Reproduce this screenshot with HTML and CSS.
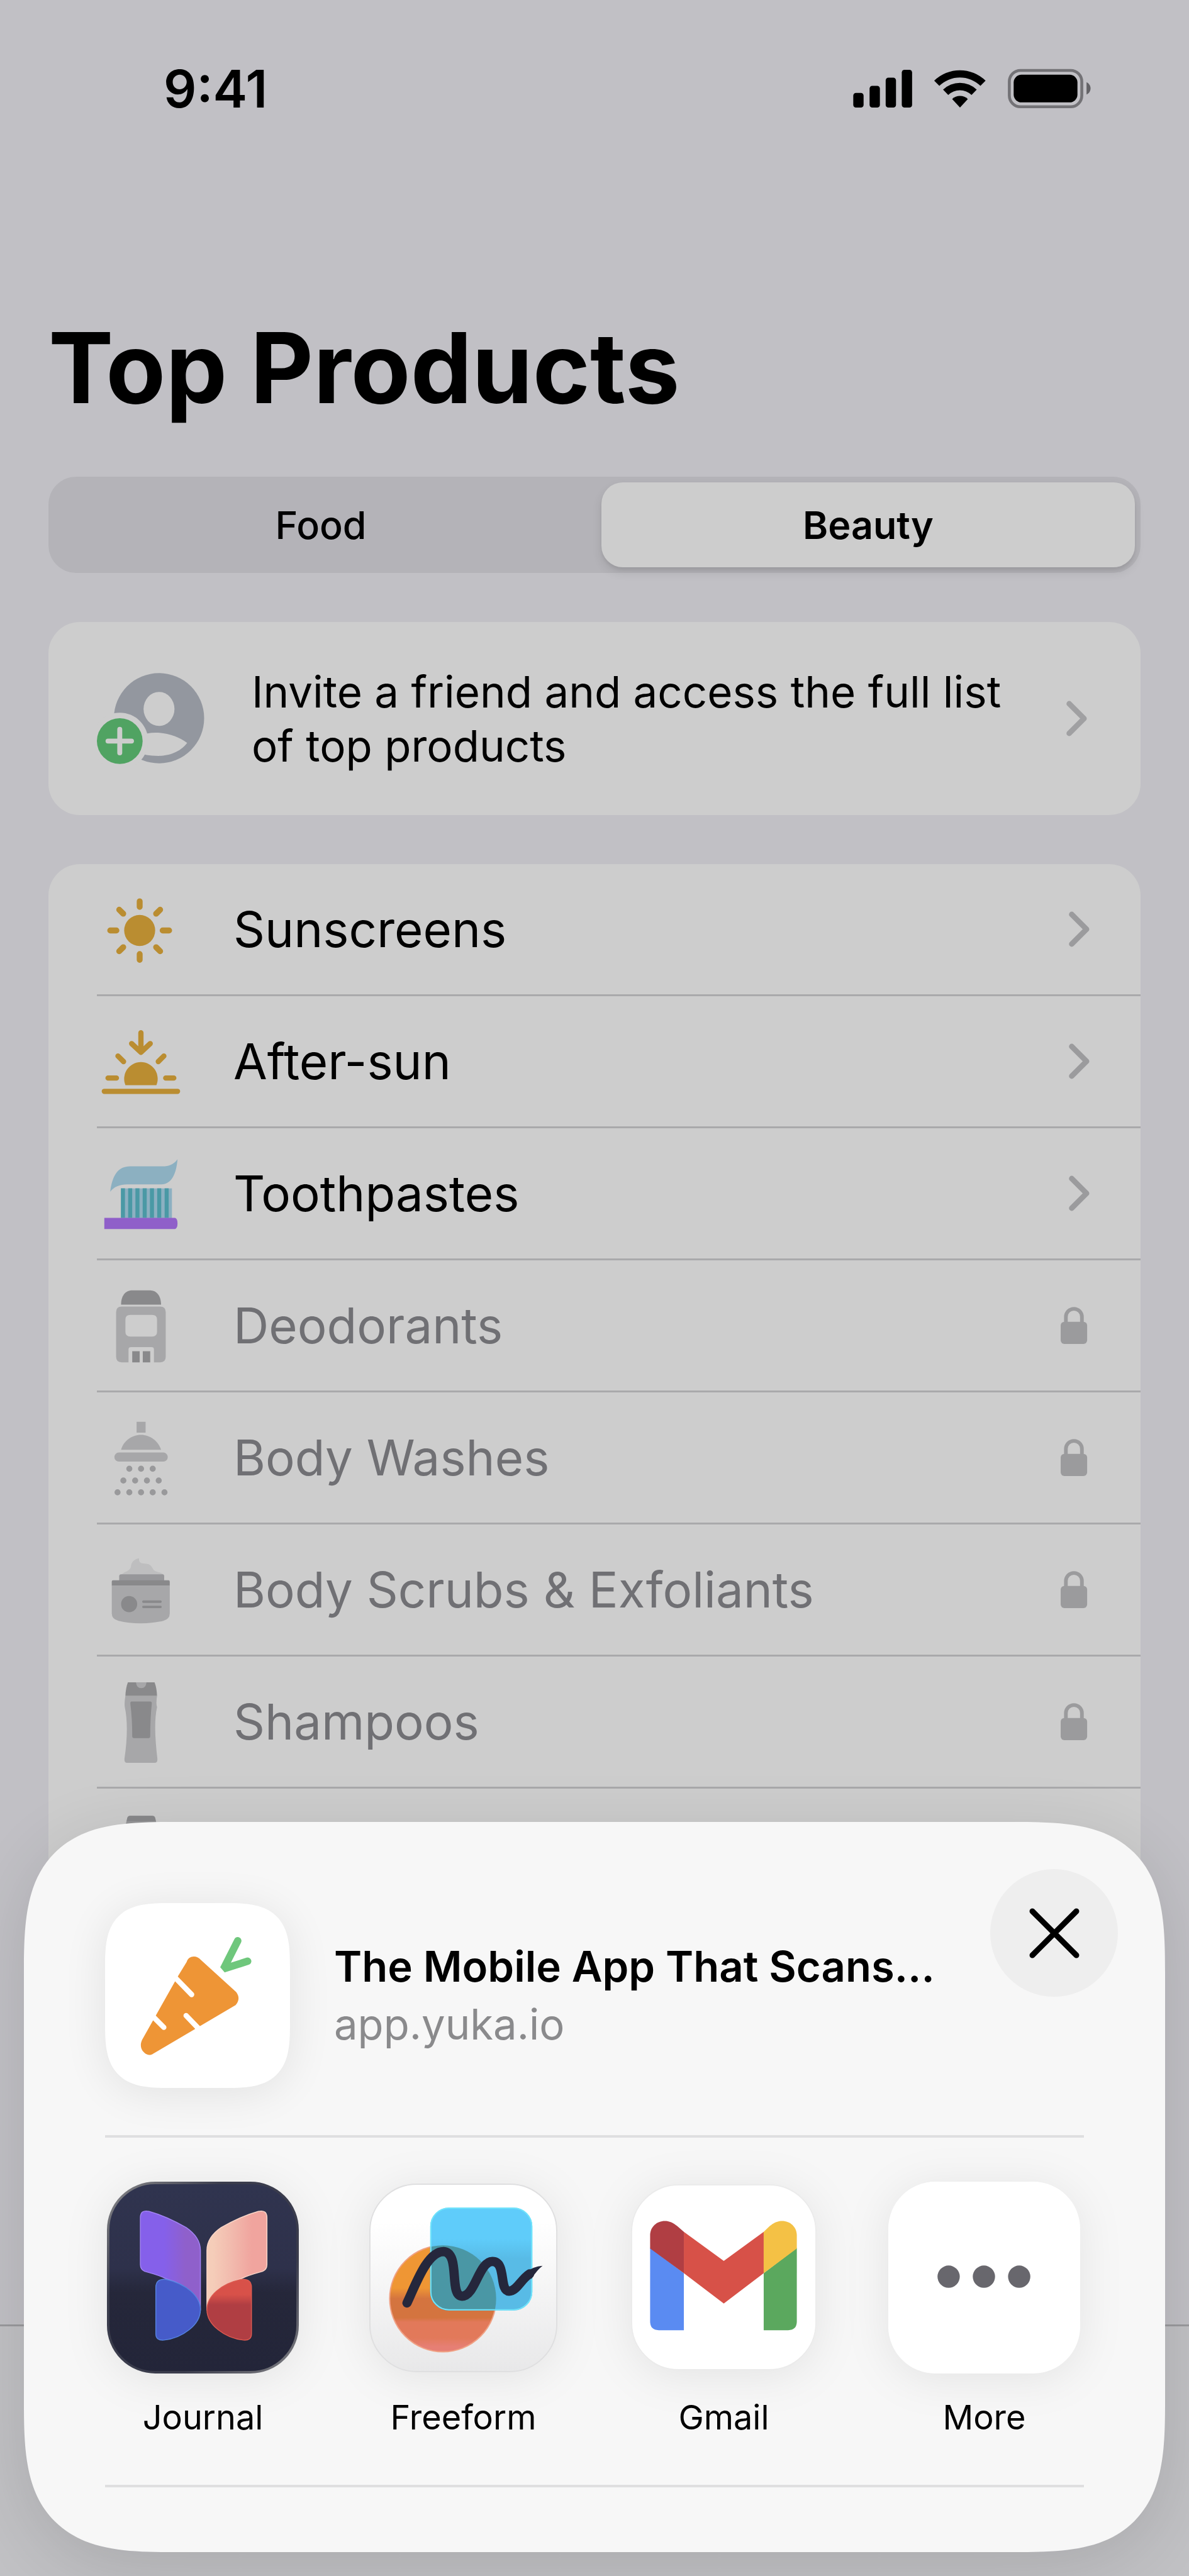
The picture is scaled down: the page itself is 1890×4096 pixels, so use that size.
FILE: index.html
```html
<!DOCTYPE html>
<html lang="en">
<head>
<meta charset="utf-8">
<title>Top Products</title>
<meta name="viewport" content="width=device-width, initial-scale=1">
<link rel="stylesheet" href="styles.css">
</head>
<body>
<svg class="defs" aria-hidden="true">
  <symbol id="chevron" viewBox="0 0 48 60">
    <path d="M18 6L42 30L18 54" fill="none" stroke="currentColor" stroke-width="9" stroke-linecap="round" stroke-linejoin="round"/>
  </symbol>
  <symbol id="lock" viewBox="0 0 48 60">
    <rect x="0" y="24" width="43" height="36" rx="6" fill="currentColor"/>
    <path d="M8.500 26V16a13 13 0 0 1 26 0V26" fill="none" stroke="currentColor" stroke-width="6"/>
  </symbol>
</svg>

<div class="app">
  <header class="status">
    <time class="clock">9:41</time>
    <svg class="status-icons" viewBox="111 60 1155 195" aria-hidden="true">
      <rect x="112" y="178" width="50" height="71" rx="13"/>
      <rect x="191" y="144" width="50" height="105" rx="13"/>
      <rect x="269" y="104" width="50" height="145" rx="13"/>
      <rect x="347" y="66" width="50" height="183" rx="13"/>
      <path d="M504 119A178 178 0 0 1 753 119L728 144A142 142 0 0 0 529 144Z"/>
      <path d="M547 162A117 117 0 0 1 710 162L685 188A81 81 0 0 0 572 188Z"/>
      <path d="M591 208A54 54 0 0 1 667 208L629 249Z"/>
      <rect x="868" y="69" width="351" height="176" rx="54" fill="none" stroke="#737276" stroke-width="14"/>
      <rect x="889" y="90" width="309" height="134" rx="38"/>
      <path d="M1242 126C1268 138 1268 174 1242 186Z" fill="#636266"/>
    </svg>
  </header>

  <main class="content">
    <h1 class="title">Top Products</h1>

    <div class="segments" role="tablist">
      <button class="segment" type="button" role="tab" aria-selected="false">Food</button>
      <button class="segment segment-on" type="button" role="tab" aria-selected="true">Beauty</button>
    </div>

    <a class="card invite" href="#invite">
      <svg class="avatar" viewBox="156 1087 174 149" aria-hidden="true">
        <circle cx="256.500" cy="1161" r="73" fill="#93979f"/>
        <ellipse cx="256.500" cy="1146" rx="25" ry="27.500" fill="#cdcdcd"/>
        <path d="M226 1189C246 1180 280 1184 302 1201C290 1217 270 1222 256 1222C240 1222 232 1220 220 1216Z" fill="#cdcdcd"/>
        <circle cx="193" cy="1198" r="46" fill="#cdcdcd"/>
        <circle cx="193" cy="1198" r="37" fill="#50a362"/>
        <path d="M193 1179V1217M174 1198H212" stroke="#cdcdcd" stroke-width="8" stroke-linecap="round"/>
      </svg>
      <span class="invite-text">Invite a friend and access the full list of top products</span>
      <svg class="mark mark-light"><use href="#chevron"/></svg>
    </a>

    <ul class="card list">
      <li><a class="row" href="#sunscreens">
        <svg class="icon" viewBox="156 1431 142 142" aria-hidden="true">
          <circle cx="225" cy="1503.500" r="25" fill="#ba8d31"/>
          <path d="M225 1456.500V1465.500M225 1541.500V1551M177.500 1503.500H187.500M262 1503.500H272.500M192 1470L198.500 1476.500M258 1470L251.500 1476.500M192 1537L198.500 1530.500M258 1537L251.500 1530.500" stroke="#ba8d31" stroke-width="9.500" stroke-linecap="round"/>
        </svg>
        <span class="label">Sunscreens</span>
        <svg class="mark"><use href="#chevron"/></svg>
      </a></li>
      <li><a class="row" href="#after-sun">
        <svg class="icon" viewBox="156 1644 142 142" aria-hidden="true">
          <path d="M202 1753A27 27 0 1 1 252 1753Z" fill="#ba8d31"/>
          <path d="M168 1763H286M174 1741.500H187.500M267 1741.500H280M190 1706L199 1715M264 1706L255 1715M227 1668.500V1698M212 1686L227 1700L242 1686" fill="none" stroke="#ba8d31" stroke-width="8.500" stroke-linecap="round" stroke-linejoin="round"/>
        </svg>
        <span class="label">After-sun</span>
        <svg class="mark"><use href="#chevron"/></svg>
      </a></li>
      <li><a class="row" href="#toothpastes">
        <svg class="icon" viewBox="156 1857 142 142" aria-hidden="true">
          <path d="M177.500 1925C181 1898 190 1884 210 1884H262C272 1884 280 1881 286 1872.500C284 1897 276 1913 260 1913H205C193 1913 183 1917 177.500 1925Z" fill="#8cb0c1"/>
          <rect x="195" y="1919.500" width="82" height="48" fill="#8cb0c1"/>
          <path d="M198 1919.500V1967M209.700 1919.500V1967M221.400 1919.500V1967M233.100 1919.500V1967M244.800 1919.500V1967M256.500 1919.500V1967M268.500 1919.500V1967" stroke="#4a99a5" stroke-width="6.500"/>
          <path d="M168 1967H282Q286 1968 286 1976Q286 1984 282 1985H168Z" fill="#8f5fc9"/>
        </svg>
        <span class="label">Toothpastes</span>
        <svg class="mark"><use href="#chevron"/></svg>
      </a></li>
      <li><a class="row row-locked" href="#deodorants">
        <svg class="icon" viewBox="156 2070 142 142" aria-hidden="true">
          <path d="M195 2107C195 2094 201 2084 213 2084H242C253 2084 259.500 2094 259.500 2107Z" fill="#89898b"/>
          <path fill-rule="evenodd" d="M196 2110H258Q267 2110 267 2119V2191Q267 2200 258 2200H248V2179Q248 2175.500 244 2175.500H211Q207 2175.500 207 2179V2200H196Q187 2200 187 2191V2119Q187 2110 196 2110ZM210 2123.500Q202 2123.500 202 2131V2151Q202 2158.500 210 2158.500H245Q253 2158.500 253 2151V2131Q253 2123.500 245 2123.500Z" fill="#a7a7a9"/>
          <path d="M213 2182h12v18h-12zM230 2182h12v18h-12z" fill="#89898b"/>
        </svg>
        <span class="label">Deodorants</span>
        <svg class="mark"><use href="#lock"/></svg>
      </a></li>
      <li><a class="row row-locked" href="#body-washes">
        <svg class="icon" viewBox="156 2283 142 142" aria-hidden="true">
          <path d="M220 2296h14.500v17.500h-14.500zM195 2341C199 2327 212 2317 227 2317S255 2327 259.500 2341ZM191.500 2345.500H263a7.300 7.300 0 0 1 0 14.600H191.500a7.300 7.300 0 0 1 0-14.600Z" fill="#a7a7a9"/>
          <path d="M208.300 2371.700h0M227.200 2371.700h0M246 2371.700h0M198.700 2390.700h0M217.700 2390.700h0M236.700 2390.700h0M255.700 2390.700h0M189.300 2409.700h0M208.300 2409.700h0M227.200 2409.700h0M246 2409.700h0M265 2409.700h0" stroke="#99999b" stroke-width="9.800" stroke-linecap="round"/>
        </svg>
        <span class="label">Body Washes</span>
        <svg class="mark"><use href="#lock"/></svg>
      </a></li>
      <li><a class="row row-locked" href="#body-scrubs">
        <svg class="icon" viewBox="156 2497 142 142" aria-hidden="true">
          <path d="M195 2544C200 2538 208 2539 211 2531C211 2523 217 2518 224 2517C223 2528 232 2524 240 2527C247 2531 245 2536 251 2538C257 2540 262 2541 264 2544Z" fill="#bebebf"/>
          <path d="M195 2543H262Q264.500 2543 264.500 2546V2553H192V2546Q192 2543 195 2543Z" fill="#97979a"/>
          <path d="M182 2552.500H271.500Q273.500 2552.500 273.500 2555V2561.500H180V2555Q180 2552.500 182 2552.500Z" fill="#89898b"/>
          <path d="M180 2561.500H273.500V2606Q273.500 2615 263 2618Q247 2622 227 2622T191 2618Q180 2615 180 2606Z" fill="#a7a7a9"/>
          <circle cx="208" cy="2591" r="13" fill="#89898b"/>
          <path d="M231 2587H258.500M231 2595.500H258.500" stroke="#89898b" stroke-width="4" stroke-linecap="round"/>
        </svg>
        <span class="label">Body Scrubs &amp; Exfoliants</span>
        <svg class="mark"><use href="#lock"/></svg>
      </a></li>
      <li><a class="row row-locked" href="#shampoos">
        <svg class="icon" viewBox="156 2710 142 142" aria-hidden="true">
          <path d="M202 2739H253Q251 2752 253 2757C248 2780 250 2810 253.500 2840Q254 2847 250 2847H204Q200 2847 200.500 2840C205 2810 206 2780 201 2757Q200 2750 202 2739Z" fill="#a7a7a9"/>
          <path d="M206 2717H249Q252.500 2726 253 2739H202Q202.500 2726 206 2717Z" fill="#89898b"/>
          <path d="M219 2717H236Q235 2726.500 227.500 2726.500T219 2717Z" fill="#a7a7a9"/>
          <path d="M212 2748H242Q245 2748 244.500 2752Q242 2775 242 2804Q242 2807 239 2807H216Q213 2807 213 2804Q213 2775 210 2752Q209.500 2748 212 2748Z" fill="#89898b"/>
        </svg>
        <span class="label">Shampoos</span>
        <svg class="mark"><use href="#lock"/></svg>
      </a></li>
      <li><a class="row row-locked" href="#conditioners" aria-label="Conditioners">
        <svg class="icon" viewBox="156 2923 142 142" aria-hidden="true">
          <path d="M200 2957L205 2936Q206 2932.500 210 2932.500H245Q249 2932.500 250 2936L255 2957Z" fill="#98989a"/>
          <path d="M204 2941L205 2936Q206 2932.500 210 2932.500H245Q249 2932.500 250 2936L251 2941Z" fill="#89898b"/>
        </svg>
      </a></li>
    </ul>
  </main>

  <nav class="tabbar" aria-label="Main"></nav>
</div>

<section class="sheet" role="dialog" aria-label="Share">
  <header class="sheet-head">
    <svg class="thumb" viewBox="170 3075 299 299" aria-hidden="true">
      <path d="M302 3170C305 3159 319 3159 325 3167L382 3219Q390 3230 381 3240L247 3319C238 3325 222 3312 230 3296L288 3193Z" fill="#ee9536"/>
      <path d="M278 3190L310 3223M243 3254L265 3276M327 3284L301 3257" stroke="#fff" stroke-width="8.500" stroke-linecap="round"/>
      <path d="M384.500 3136L361.500 3181.500L400.500 3169" fill="none" stroke="#6fc77c" stroke-width="12" stroke-linecap="round" stroke-linejoin="bevel"/>
    </svg>
    <div class="link">
      <h2 class="link-title">The Mobile App That Scans...</h2>
      <p class="link-host">app.yuka.io</p>
    </div>
    <button class="close" type="button" aria-label="Close">
      <svg viewBox="0 0 80 80" aria-hidden="true"><path d="M5 5L75 75M75 5L5 75" stroke="#000" stroke-width="9" stroke-linecap="round"/></svg>
    </button>
  </header>

  <div class="apps">
    <button class="share" type="button">
      <svg class="tile" viewBox="172 3525 310 310" aria-hidden="true">
        <defs>
          <linearGradient id="j-bg" x1="0" y1="0" x2="0" y2="1"><stop offset="0" stop-color="#30344f"/><stop offset=".45" stop-color="#2e314b"/><stop offset=".58" stop-color="#25273a"/><stop offset="1" stop-color="#232539"/></linearGradient>
          <linearGradient id="j-rim" x1="0" y1="0" x2="1" y2="1"><stop offset="0" stop-color="#8a8a8c"/><stop offset=".3" stop-color="#3a3c4c"/><stop offset=".7" stop-color="#3a3c4c"/><stop offset="1" stop-color="#808084"/></linearGradient>
          <linearGradient id="j-a"><stop offset=".4" stop-color="#8560ea"/><stop offset=".75" stop-color="#8f60cb"/></linearGradient>
          <linearGradient id="j-b"><stop offset=".1" stop-color="#f5cdb9"/><stop offset=".4" stop-color="#f2bbae"/><stop offset=".75" stop-color="#f0a49e"/></linearGradient>
          <linearGradient id="j-c" x1="0" y1="0" x2="0" y2="1"><stop offset=".25" stop-color="#d85149"/><stop offset=".42" stop-color="#b03e43"/></linearGradient>
        </defs>
        <rect x="174" y="3527" width="306" height="306" rx="76" fill="url(#j-bg)" stroke="url(#j-rim)" stroke-width="4"/>
        <path d="M226 3583C226 3574 231 3571 240 3573C262 3579 284 3590 300 3599C316 3610 323 3622 323 3636V3733C318 3706 296 3690 268 3682C256 3676 244 3673 233 3670Q226 3667 226 3659Z" fill="url(#j-a)" stroke="#a283f5" stroke-width="1.500"/>
        <path d="M251 3696Q251 3681 268 3683C300 3690 323 3710 323 3732C323 3756 294 3778 264 3781Q251 3782 251 3771Z" fill="#465bc9" stroke="#5583e0" stroke-width="1.500"/>
        <path d="M430.500 3583C430.500 3574 425.500 3571 416.500 3573C394.500 3579 372.500 3590 356.500 3599C340.500 3610 333.500 3622 333.500 3636V3733C338.500 3706 360.500 3690 388.500 3682C400.500 3676 412.500 3673 423.500 3670Q430.500 3667 430.500 3659Z" fill="url(#j-b)" stroke="#f9d6c8" stroke-width="1.500"/>
        <path d="M405.500 3696Q405.500 3681 388.500 3683C356.500 3690 333.500 3710 333.500 3732C333.500 3756 362.500 3778 392.500 3781Q405.500 3782 405.500 3771Z" fill="url(#j-c)" stroke="#dc5a50" stroke-width="1.500"/>
      </svg>
      <span>Journal</span>
    </button>
    <button class="share" type="button">
      <svg class="tile" viewBox="594 3525 310 310" aria-hidden="true">
        <defs>
          <linearGradient id="f-bg" x1="0" y1="0" x2="0" y2="1"><stop offset=".2" stop-color="#fff"/><stop offset="1" stop-color="#e8e8e9"/></linearGradient>
          <linearGradient id="f-o" x1="0" y1="0" x2="0" y2="1"><stop offset=".4" stop-color="#ef9634"/><stop offset=".5" stop-color="#d4743f"/><stop offset=".68" stop-color="#d4743f"/><stop offset=".72" stop-color="#e2795a"/><stop offset=".87" stop-color="#e2795a"/><stop offset=".95" stop-color="#e67f74"/></linearGradient>
          <linearGradient id="f-b" x1="0" y1="0" x2="0" y2="1"><stop offset=".3" stop-color="#5fccfa"/><stop offset=".5" stop-color="#58bbe6"/></linearGradient>
          <clipPath id="f-clip"><rect x="695.500" y="3567" width="165" height="166" rx="30"/></clipPath>
        </defs>
        <rect x="598" y="3529" width="302" height="303" rx="76" fill="url(#f-bg)" stroke="#dfdfe0" stroke-width="2"/>
        <circle cx="716" cy="3714" r="86" fill="url(#f-o)" stroke="#f0a184" stroke-width="2"/>
        <rect x="695.500" y="3567" width="165" height="166" rx="30" fill="url(#f-b)"/>
        <circle cx="716" cy="3714" r="86" fill="#4a97a5" clip-path="url(#f-clip)"/>
        <rect x="696.500" y="3568" width="163" height="164" rx="29" fill="none" stroke="#6fe4fb" stroke-width="2"/>
        <path d="M658 3721C671 3694 690 3638 717 3638C745 3640 725 3709 747 3710C768 3710 774 3654 796 3654C819 3654 806 3701 823 3702C835 3702 842 3683 856 3674" fill="none" stroke="#25273c" stroke-width="15" stroke-linecap="round" stroke-linejoin="round"/>
        <path d="M849 3672Q862 3662 877 3661Q868 3668 859 3682Z" fill="#25273c"/>
      </svg>
      <span>Freeform</span>
    </button>
    <button class="share" type="button">
      <svg class="tile" viewBox="1014 3525 310 310" aria-hidden="true">
        <rect x="1020" y="3530" width="298" height="299" rx="76" fill="#fff" stroke="#ebebeb" stroke-width="2"/>
        <path d="M1050 3632L1104.500 3673V3765H1064Q1050 3765 1050 3751Z" fill="#5a8bf2"/>
        <path d="M1287 3632L1233.500 3673V3765H1273Q1287 3765 1287 3751Z" fill="#5ba85e"/>
        <path d="M1104.500 3606L1169 3653L1233.500 3606V3673L1169 3722L1104.500 3673Z" fill="#d75148"/>
        <path d="M1050 3633V3612C1050 3590 1076 3580 1094 3597L1104.500 3606V3673Z" fill="#b03e43"/>
        <path d="M1287 3633V3612C1287 3590 1261 3580 1243 3597L1233.500 3606V3673Z" fill="#f4c145"/>
      </svg>
      <span>Gmail</span>
    </button>
    <button class="share" type="button">
      <svg class="tile" viewBox="1435 3525 310 310" aria-hidden="true">
        <rect x="1435" y="3525" width="310" height="310" rx="76" fill="#fff"/>
        <path d="M1532.500 3678.500h0M1589.500 3678.500h0M1646.500 3678.500h0" stroke="#68676d" stroke-width="36" stroke-linecap="round"/>
      </svg>
      <span>More</span>
    </button>
  </div>
</section>
</body>
</html>
```
FILE: styles.css
```css
* {
  box-sizing: border-box;
}

body {
  margin: 0;
  background: #c1c0c5;
  color: #000;
  font-family: Inter, "Liberation Sans", sans-serif;
}

h1, h2, p, ul {
  margin: 0;
  padding: 0;
}

a {
  color: inherit;
  text-decoration: none;
}

button {
  border: 0;
  padding: 0;
  background: none;
  color: inherit;
  font: inherit;
}

svg {
  display: block;
  flex: none;
}

.defs {
  position: absolute;
  width: 0;
  height: 0;
}

.app {
  display: flex;
  flex-direction: column;
  height: 100vh;
  overflow: hidden;
}

.status {
  flex: none;
  display: flex;
  align-items: center;
  justify-content: space-between;
  height: 282px;
  padding: 0 155px 0 260px;
}

.clock {
  font-size: 82px;
  font-weight: 600;
}

.status-icons {
  width: 379px;
  height: 64px;
}

.content {
  flex: 1;
  display: flex;
  flex-direction: column;
  min-height: 0;
  gap: 78px;
  padding: 208px 77px 0;
  overflow: hidden;
}

.title {
  flex: none;
  font-size: 155px;
  font-weight: 700;
  line-height: 190px;
}

.segments {
  flex: none;
  display: grid;
  grid-template-columns: 1fr 1fr;
  column-gap: 22px;
  height: 153px;
  padding: 9px;
  border-radius: 44px;
  background: #b4b3b8;
}

.segment {
  border-radius: 34px;
  font-size: 61px;
  font-weight: 500;
}

.segment-on {
  background: #cdcdcd;
  box-shadow: 0 8px 16px rgba(0, 0, 0, .1), 0 4px 4px rgba(0, 0, 0, .05);
  font-weight: 600;
}

.card {
  flex: none;
  border-radius: 50px;
  background: #cdcdcd;
  list-style: none;
}

.invite {
  display: flex;
  align-items: center;
  gap: 75px;
  height: 307px;
  padding: 0 84px 0 77px;
}

.avatar {
  width: 171px;
  height: 147px;
}

.invite-text {
  flex: 1;
  font-size: 69px;
  line-height: 86px;
}

.mark {
  width: 47px;
  height: 59px;
  color: #9b9b9d;
}

.mark-light {
  color: #a0a0a2;
}

.list {
  padding-left: 77px;
}

.row {
  display: flex;
  align-items: center;
  gap: 77px;
  height: 210px;
  padding-right: 80px;
  border-bottom: 3px solid #a9a9ab;
}

.row-locked {
  color: #707074;
}

.icon {
  width: 140px;
  height: 140px;
}

.label {
  flex: 1;
  font-size: 78px;
}

.tabbar {
  flex: none;
  height: 400px;
  border-top: 3px solid #9a9a9d;
  background: #c1c1c4;
}

.sheet {
  position: fixed;
  right: 38px;
  bottom: 38px;
  left: 38px;
  border-radius: 168px;
  background: #f7f7f7;
  box-shadow: 0 24px 110px rgba(0, 0, 0, .12);
}

.sheet-head {
  display: flex;
  align-items: flex-start;
  padding: 75px 75px 0 129px;
}

.thumb {
  width: 294px;
  height: 294px;
  margin-top: 54px;
  border-radius: 72px;
  background: #fff;
  box-shadow: 0 8px 70px rgba(0, 0, 0, .09);
}

/* Smooth, continuous corners where the browser can draw them */
@supports (corner-shape: superellipse(1.6)) {
  .sheet {
    border-radius: 240px;
    corner-shape: superellipse(1.6);
  }

  .thumb {
    border-radius: 104px;
    corner-shape: superellipse(1.6);
  }
}

.link {
  flex: 1;
  min-width: 0;
  padding: 109px 0 0 70px;
}

.link-title {
  overflow: hidden;
  font-size: 67px;
  font-weight: 600;
  line-height: 92px;
  white-space: nowrap;
}

.link-host {
  color: #8a8a8c;
  font-size: 67px;
  line-height: 92px;
}

.close {
  display: grid;
  place-items: center;
  width: 203px;
  height: 203px;
  border-radius: 50%;
  background: #eee;
}

.close svg {
  width: 80px;
  height: 80px;
}

.apps {
  display: flex;
  justify-content: space-between;
  height: 560px;
  margin: 75px 129px 103px;
  padding: 70px 6px 0 3px;
  border-top: 4px solid #dfdfe0;
  border-bottom: 4px solid #dfdfe0;
}

.share {
  display: flex;
  flex-direction: column;
  align-items: center;
  gap: 37px;
  width: 305px;
  font-size: 54px;
  line-height: 66px;
}

.tile {
  width: 305px;
  height: 305px;
  overflow: visible;
  filter: drop-shadow(0 8px 34px rgba(0, 0, 0, .08));
}
```
